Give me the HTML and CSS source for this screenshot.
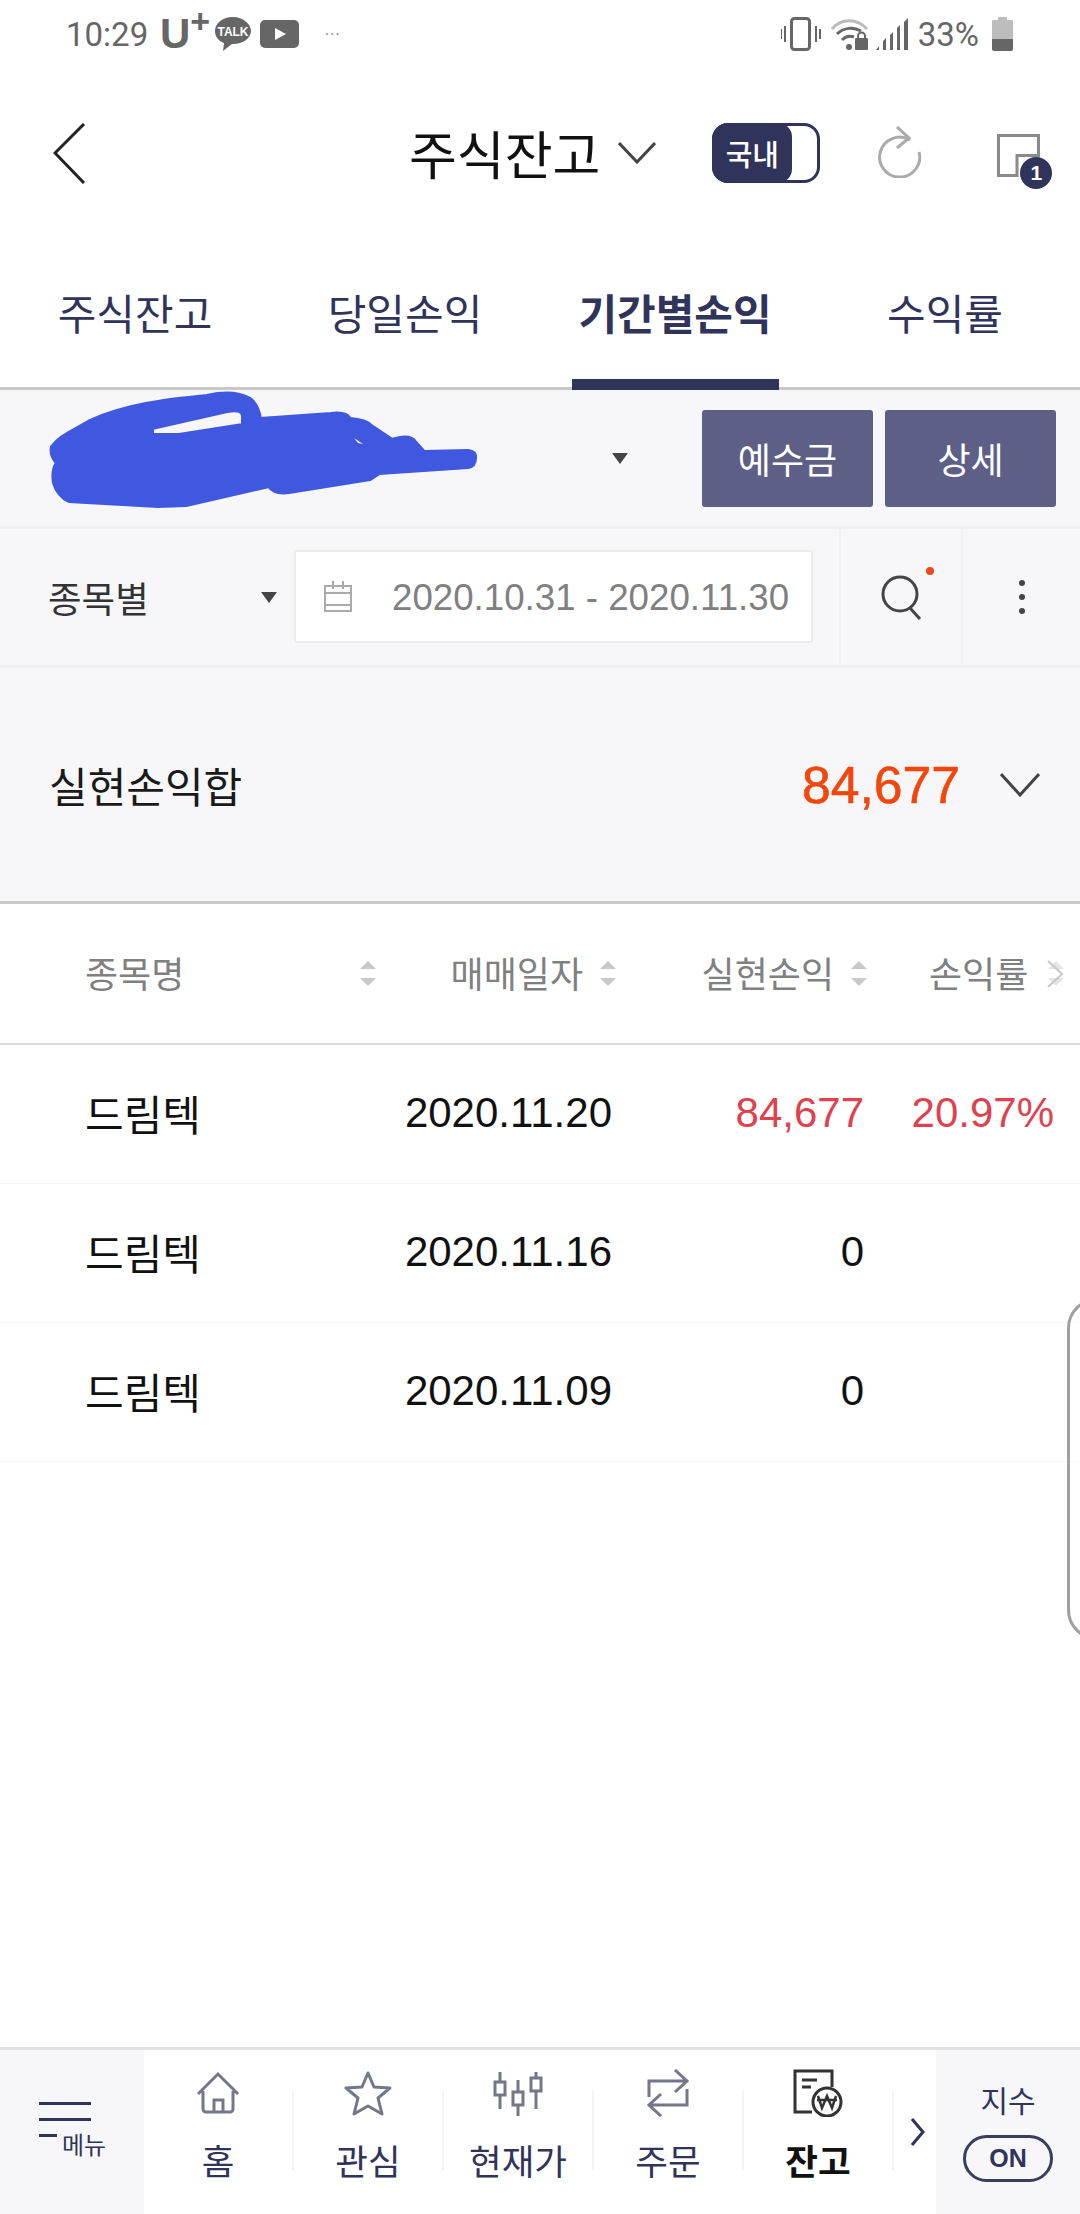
FILE: index.html
```html
<!DOCTYPE html>
<html lang="ko">
<head>
<meta charset="utf-8">
<title>주식잔고</title>
<link rel="stylesheet" href="styles.css">
</head>
<body>
<div class="screen">
  <div class="status">
    <span class="time">10:29</span>
    <span class="carrier">U<span class="plus">+</span></span>
    <svg class="st-talk" width="38" height="36" viewBox="0 0 38 36"><path d="M19 1C9 1 1 7 1 15c0 6 4 10 9 12l-1 8 9-7h1c10 0 18-6 18-13S29 1 19 1z" fill="#666"/><text x="19" y="20" text-anchor="middle" class="talk-text">TALK</text></svg>
    <svg class="st-yt" width="39" height="28" viewBox="0 0 39 28"><rect width="39" height="28" rx="5" fill="#666"/><path d="M15 8l11 6-11 6z" fill="#fff"/></svg>
    <span class="st-dots">···</span>
    <div class="st-right">
      <svg width="40" height="34" viewBox="0 0 40 34"><rect x="10.5" y="1.5" width="18" height="31" rx="3" fill="none" stroke="#666" stroke-width="3"/><path d="M4 9v16M0 12v10M35 9v16M39 12v10" stroke="#666" stroke-width="2"/></svg>
      <svg class="st-wifi" width="38" height="34" viewBox="0 0 38 34"><path d="M1 12C10 1 26 1 36 12" fill="none" stroke="#bbb" stroke-width="3"/><path d="M6 17c7-7 17-7 24-3M11 23c4-4 9-4 12-3" fill="none" stroke="#666" stroke-width="3"/><circle cx="18" cy="30" r="3" fill="#666"/><path d="M27 21v-2a3.500 3.500 0 0 1 7 0v2" fill="none" stroke="#666" stroke-width="2"/><rect x="24" y="21" width="13" height="12" rx="1" fill="#666"/></svg>
      <svg class="st-signal" width="33" height="34" viewBox="0 0 33 34"><path d="M0 33l3-4v4zM7 33v-9l3-3v12zM14 33V18l3-3v18zM21 33V11l3-3v25zM28 33V5l4-4v32z" fill="#666"/></svg>
      <span class="pct">33%</span>
      <svg class="st-batt" width="21" height="34" viewBox="0 0 21 34"><path d="M6 0h9v3h5a1 1 0 0 1 1 1v18H0V4a1 1 0 0 1 1-1h5z" fill="#bdbdbd"/><path d="M0 22h21v10a2 2 0 0 1-2 2H2a2 2 0 0 1-2-2z" fill="#666"/></svg>
    </div>
  </div>

  <header class="top">
    <svg class="back" width="33" height="61" viewBox="0 0 33 61"><path d="M31 1L2 30l29 30" fill="none" stroke="#222" stroke-width="3"/></svg>
    <h1 class="title">주식잔고</h1>
    <svg class="title-chev" width="38" height="22" viewBox="0 0 38 22"><path d="M1 1l18 19L37 1" fill="none" stroke="#444" stroke-width="3"/></svg>
    <div class="toggle"><span class="toggle-on">국내</span></div>
    <svg class="refresh" width="46" height="52" viewBox="0 0 46 52"><path d="M34 14a20 20 0 1 0 9 12" fill="none" stroke="#aaa" stroke-width="3"/><path d="M21 1l12 11-12 10" fill="none" stroke="#aaa" stroke-width="3"/></svg>
    <div class="copy">
      <svg width="43" height="43" viewBox="0 0 43 43"><path d="M1.500 1.500h40v20H20v20H1.500z" fill="none" stroke="#8a8a8a" stroke-width="3"/></svg>
      <span class="copy-badge">1</span>
    </div>
  </header>

  <nav class="tabs">
    <a class="tab">주식잔고</a>
    <a class="tab">당일손익</a>
    <a class="tab tab-active">기간별손익</a>
    <a class="tab">수익률</a>
  </nav>

  <section class="account">
    <svg class="scribble" width="440" height="136" viewBox="45 390 440 136"><path fill-rule="evenodd" d="M52 447C60 436 72 432 90 421C125 405 165 400 207 396Q234 390 250 399Q258 405 260 419L331 414Q346 412 350 419Q366 420 371 426L392 440Q410 434 415 442L424 452L468 451Q476 452 475 458Q475 466 468 467L379 473L370 479L289 492Q274 494 269 486L186 505L158 506L69 501Q58 496 54 483Q52 470 57 463Q50 455 52 447ZM152 428L227 411Q243 408 243 416V425L179 435H152Z" fill="#4058e0" stroke="#4058e0" stroke-width="4" stroke-linejoin="round"/><path d="M354 438l9 6-5-1z" fill="#f7f7f9"/></svg>
    <svg class="caret-big" width="16" height="11" viewBox="0 0 16 11"><path d="M0 0h16L8 11z" fill="#444"/></svg>
    <button class="act act-first">예수금</button>
    <button class="act">상세</button>
  </section>

  <section class="filter">
    <div class="sel"><span>종목별</span><svg width="16" height="11" viewBox="0 0 16 11"><path d="M0 0h16L8 11z" fill="#444"/></svg></div>
    <div class="date">
      <svg width="28" height="31" viewBox="0 0 28 31"><path d="M1 5h26v25H1zM1 12h26M1 24h26M9 0v8M19 0v8" fill="none" stroke="#aaa" stroke-width="2"/></svg>
      <span>2020.10.31 - 2020.11.30</span>
    </div>
    <div class="cell cell-search">
      <svg width="48" height="46" viewBox="0 0 48 46"><circle cx="20" cy="20" r="17" fill="none" stroke="#444" stroke-width="3"/><path d="M30 34l10 11" stroke="#444" stroke-width="3"/></svg>
      <i class="reddot"></i>
    </div>
    <div class="cell cell-more"><i></i><i></i><i></i></div>
  </section>

  <section class="summary">
    <span class="sum-label">실현손익합</span>
    <span class="sum-value">84,677</span>
    <svg class="sum-chev" width="40" height="24" viewBox="0 0 40 24"><path d="M1 1l19 21L39 1" fill="none" stroke="#444" stroke-width="3"/></svg>
  </section>

  <section class="table">
    <div class="thead">
      <div class="th th-name"><span>종목명</span><i class="sort"></i></div>
      <div class="th th-date"><span>매매일자</span><i class="sort"></i></div>
      <div class="th th-pnl"><span>실현손익</span><i class="sort"></i></div>
      <div class="th th-rate"><span>손익률</span><i class="sort sort-faint"></i>
        <svg class="th-chev" width="18" height="28" viewBox="0 0 18 28"><path d="M2 1l14 13L2 27" fill="none" stroke="#c8c8c8" stroke-width="2"/></svg>
      </div>
    </div>
    <div class="row"><span class="c-name">드림텍</span><span class="c-date">2020.11.20</span><span class="c-pnl up">84,677</span><span class="c-rate up">20.97%</span></div>
    <div class="row"><span class="c-name">드림텍</span><span class="c-date">2020.11.16</span><span class="c-pnl">0</span><span class="c-rate"></span></div>
    <div class="row"><span class="c-name">드림텍</span><span class="c-date">2020.11.09</span><span class="c-pnl">0</span><span class="c-rate"></span></div>
  </section>

  <div class="edge-handle"></div>

  <footer class="bottom">
    <div class="menu">
      <i class="ml"></i><i class="ml"></i><i class="ml ml-short"></i>
      <span class="menu-text">메뉴</span>
    </div>
    <div class="item">
      <svg width="48" height="48" viewBox="0 0 48 48"><path d="M4 25L24 5l20 20M9 22v18a3 3 0 0 0 3 3h24a3 3 0 0 0 3-3V22M20 43V31h9v12" fill="none" stroke="#74768a" stroke-width="3"/></svg>
      <span>홈</span>
    </div>
    <i class="sep"></i>
    <div class="item">
      <svg width="48" height="48" viewBox="0 0 48 48"><path d="M24 4l6 14 16 1-12 10 4 16-14-8-14 8 4-16L2 19l16-1z" fill="none" stroke="#74768a" stroke-width="3" stroke-linejoin="round"/></svg>
      <span>관심</span>
    </div>
    <i class="sep"></i>
    <div class="item">
      <svg width="50" height="48" viewBox="0 0 50 48"><path d="M2 13h10v13H2zM7 3v10M7 26v14M20 23h10v13H20zM25 11v12M25 36v11M38 9h10v13H38zM43 3v6M43 22v18" fill="none" stroke="#74768a" stroke-width="3"/></svg>
      <span>현재가</span>
    </div>
    <i class="sep"></i>
    <div class="item">
      <svg width="48" height="48" viewBox="0 0 48 48"><path d="M5 28V12h36M31 1l12 11-12 11M43 20v16H7M17 25L5 36l12 11" fill="none" stroke="#74768a" stroke-width="3"/></svg>
      <span>주문</span>
    </div>
    <i class="sep"></i>
    <div class="item item-active">
      <svg width="50" height="48" viewBox="0 0 50 48"><path d="M19 43H2V2h37v16" fill="none" stroke="#333" stroke-width="3"/><path d="M9 11h15M9 18h9" stroke="#333" stroke-width="3"/><circle cx="34" cy="33" r="14" fill="#fff" stroke="#333" stroke-width="3"/><path d="M25 27l4 12 5-12 5 12 4-12M24 31h20" fill="none" stroke="#333" stroke-width="2.500"/></svg>
      <span>잔고</span>
    </div>
    <i class="sep"></i>
    <div class="more-arrow">
      <svg width="14" height="28" viewBox="0 0 14 28"><path d="M1 1l11 13L1 27" fill="none" stroke="#31345a" stroke-width="3"/></svg>
    </div>
    <div class="index">
      <span class="index-text">지수</span>
      <span class="pill">ON</span>
    </div>
  </footer>
</div>
</body>
</html>
```
FILE: styles.css
```css
* { box-sizing: border-box; }
html, body { margin: 0; padding: 0; background: #fff; }
body { font-family: "Noto Sans CJK KR", "Liberation Sans", sans-serif; }
i { display: block; font-style: normal; }
svg { display: block; flex: none; }

.screen {
  position: relative;
  width: 1080px;
  height: 2214px;
  overflow: hidden;
  display: flex;
  flex-direction: column;
  background: #fff;
}

/* status bar */
.status {
  height: 60px;
  flex: none;
  display: flex;
  align-items: center;
  padding: 8px 67px 0 66px;
  color: #666;
}
.time { font: 33px Roboto, sans-serif; width: 82px; }
.carrier {
  font: bold 42px/52px "Liberation Sans", sans-serif;
  height: 52px;
  margin-left: 12px;
  display: flex;
  align-items: flex-start;
}
.plus { font-size: 34px; line-height: 26px; }
.st-talk { margin-left: 4px; }
.talk-text { font: bold 12px "Liberation Sans", sans-serif; fill: #fff; }
.st-yt { margin-left: 8px; }
.st-dots { font: 16px "Liberation Sans", sans-serif; color: #888; margin-left: 25px; }
.st-right { margin-left: auto; display: flex; align-items: center; }
.st-wifi { margin-left: 10px; }
.st-signal { margin-left: 7px; }
.pct { font: 33px Roboto, sans-serif; margin-left: 9px; }
.st-batt { margin-left: 13px; }

/* header */
.top {
  height: 186px;
  flex: none;
  display: flex;
  align-items: center;
  padding-left: 53px;
}
.title {
  margin: 0 0 0 323px;
  font-size: 52px;
  font-weight: 400;
  color: #111;
  line-height: 1;
  white-space: nowrap;
}
.title-chev { margin-left: 18px; }
.toggle {
  margin-left: 56px;
  width: 108px;
  height: 60px;
  border: 3px solid #31345a;
  border-radius: 16px;
  background: #fff;
}
.toggle-on {
  display: flex;
  align-items: center;
  justify-content: center;
  width: 80px;
  height: 60px;
  margin: -3px 0 0 -3px;
  background: #31345a;
  color: #fff;
  border-radius: 16px 14px 14px 16px;
  font-size: 29px;
  font-weight: 500;
}
.refresh { margin-left: 56px; margin-top: -2px; }
.copy { position: relative; margin-left: 75px; margin-top: 5px; }
.copy-badge {
  position: absolute;
  left: 23px;
  top: 23px;
  width: 32px;
  height: 32px;
  border-radius: 50%;
  background: #31345a;
  color: #fff;
  font: bold 21px/32px "Liberation Sans", sans-serif;
  text-align: center;
}

/* tabs */
.tabs {
  height: 144px;
  flex: none;
  display: grid;
  grid-template-columns: repeat(4, 270px);
  border-bottom: 3px solid #c8c8c8;
}
.tab {
  position: relative;
  display: flex;
  align-items: center;
  justify-content: center;
  padding-bottom: 10px;
  font-size: 42px;
  color: #31345a;
  white-space: nowrap;
}
.tab-active { font-weight: 700; }
.tab-active::after {
  content: "";
  position: absolute;
  left: 32px;
  right: 31px;
  bottom: -3px;
  height: 11px;
  background: #31345a;
}

/* account row */
.account {
  height: 139px;
  flex: none;
  display: flex;
  align-items: center;
  background: #f7f7f9;
  border-bottom: 3px solid #f0f0f0;
  padding-left: 45px;
}
.caret-big { margin-left: 127px; }
.act {
  width: 171px;
  height: 97px;
  margin-left: 12px;
  border: 0;
  padding: 0;
  border-radius: 3px;
  background: #5d5f87;
  color: #fff;
  font: 36px "Noto Sans CJK KR", sans-serif;
}
.act-first { margin-left: 74px; }

/* filter row */
.filter {
  height: 139px;
  flex: none;
  display: flex;
  align-items: stretch;
  background: #f7f7f9;
  border-bottom: 3px solid #f0f0f0;
}
.sel {
  width: 294px;
  padding: 0 17px 0 48px;
  display: flex;
  align-items: center;
  justify-content: space-between;
  font-size: 36.500px;
  color: #333;
}
.date {
  width: 519px;
  height: 93px;
  margin-top: 21px;
  display: flex;
  align-items: center;
  padding-left: 28px;
  background: #fff;
  border: 2px solid #ececec;
  border-radius: 2px;
  font: 36.700px "Liberation Sans", sans-serif;
  color: #808080;
  white-space: nowrap;
}
.date span { margin-left: 40px; margin-top: 2px; }
.cell { border-left: 2px solid #f0f0f0; display: flex; }
.cell-search {
  position: relative;
  margin-left: 26px;
  width: 122px;
  align-items: center;
  padding: 0 0 0 39px;
}
.reddot {
  position: absolute;
  left: 85px;
  top: 38px;
  width: 8px;
  height: 8px;
  border-radius: 50%;
  background: #f0481a;
}
.cell-more {
  flex: 1;
  flex-direction: column;
  align-items: center;
  justify-content: center;
  gap: 8px;
}
.cell-more i { width: 6px; height: 6px; border-radius: 50%; background: #444; }

/* summary */
.summary {
  height: 236px;
  flex: none;
  display: flex;
  align-items: center;
  padding: 0 40px 0 49px;
  background: #f7f7f9;
  border-bottom: 3px solid #c8c8c8;
}
.sum-label { font-size: 42px; color: #1a1a1a; white-space: nowrap; }
.sum-value {
  margin-left: auto;
  font: 51.700px "Liberation Sans", sans-serif;
  -webkit-text-stroke: 0.6px #f2460d;
  color: #f2460d;
}
.sum-chev { margin-left: 40px; }

/* table */
.thead {
  height: 141px;
  display: grid;
  grid-template-columns: 376px 240px 251px 1fr;
  align-items: center;
  border-bottom: 2px solid #dcdcdc;
  font-size: 36px;
  color: #808080;
}
.th { display: flex; align-items: center; justify-content: flex-end; gap: 17px; white-space: nowrap; }
.th span { margin-top: -3px; }
.th-name { padding-left: 85px; justify-content: space-between; }
.th-rate { position: relative; justify-content: flex-start; padding-left: 62px; gap: 20px; }
.sort { position: relative; width: 16px; height: 25px; }
.sort::before, .sort::after {
  content: "";
  position: absolute;
  left: 0;
  border-left: 8px solid transparent;
  border-right: 8px solid transparent;
}
.sort::before { top: 0; border-bottom: 8px solid #c8c8c8; }
.sort::after { bottom: 0; border-top: 8px solid #c8c8c8; }
.sort-faint::before { border-bottom-color: #e4e4e4; }
.sort-faint::after { border-top-color: #e4e4e4; }
.th-chev { position: absolute; left: 179px; top: 11px; }

.row {
  height: 139px;
  display: grid;
  grid-template-columns: 300px 227px 252px 190px;
  align-items: center;
  padding: 0 0 3px 85px;
  border-bottom: 1px solid #f5f5f5;
  font: 42px "Liberation Sans", sans-serif;
  color: #111;
}
.c-name { font: 42px "Noto Sans CJK KR", sans-serif; white-space: nowrap; }
.c-date, .c-pnl, .c-rate { text-align: right; }
.up { color: #e0414f; }

.edge-handle {
  position: absolute;
  left: 1067px;
  top: 1298px;
  width: 60px;
  height: 342px;
  border: 3px solid #a0a0a0;
  border-radius: 45px;
  background: rgba(255, 255, 255, 0.6);
}

/* bottom nav */
.bottom {
  margin-top: auto;
  height: 167px;
  flex: none;
  display: flex;
  align-items: flex-start;
  border-top: 3px solid #e2e2e2;
  background: #fff;
}
.menu {
  position: relative;
  width: 144px;
  height: 164px;
  background: #f7f7f9;
  padding: 52px 0 0 39px;
}
.ml { width: 52px; height: 3px; background: #31345a; margin-bottom: 13px; }
.ml-short { width: 18px; }
.menu-text {
  position: absolute;
  left: 62px;
  top: 76px;
  font-size: 24px;
  color: #31345a;
}
.item {
  width: 148px;
  height: 164px;
  padding-top: 19px;
  display: flex;
  flex-direction: column;
  align-items: center;
  font-size: 35.500px;
  color: #31345a;
  white-space: nowrap;
}
.item span { margin-top: 18px; line-height: 50px; }
.item-active { color: #111; font-weight: 700; }
.sep { width: 2px; height: 79px; margin-top: 41px; background: #f4f4f4; flex: none; }
.more-arrow {
  width: 42px;
  height: 164px;
  display: flex;
  align-items: center;
  justify-content: center;
  padding-left: 6px;
}
.index {
  width: 144px;
  height: 164px;
  background: #f7f7f9;
  display: flex;
  flex-direction: column;
  align-items: center;
  padding-top: 27px;
  margin-left: auto;
}
.index-text { font-size: 30px; color: #31345a; line-height: 44px; }
.pill {
  margin-top: 14px;
  width: 90px;
  height: 47px;
  border: 3px solid #3a3d60;
  border-radius: 24px;
  color: #31345a;
  font: bold 25px/41px "Liberation Sans", sans-serif;
  text-align: center;
}
```
